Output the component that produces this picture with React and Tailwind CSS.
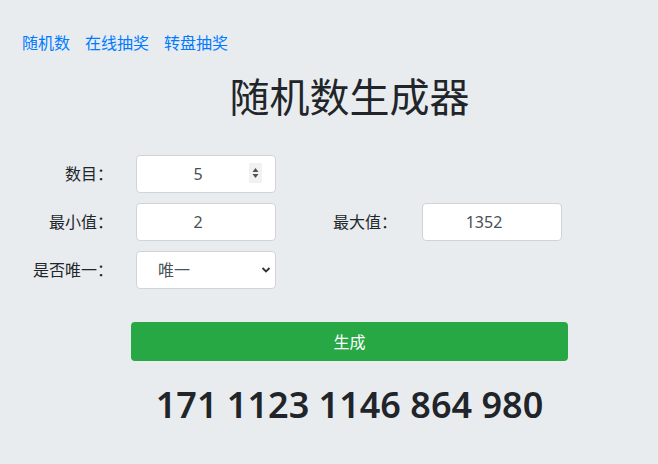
import React, { useState } from 'react';

const font = { fontFamily: '"Noto Sans", "Noto Sans CJK SC", sans-serif' };

const Spinner = () => (
  <svg className="absolute right-[14px] top-[8px]" width="13" height="20" viewBox="0 0 13 20">
    <rect x="0" y="0" width="13" height="20" fill="#f1f1f1" />
    <path d="M6.5 5 L9.5 9 L3.5 9 Z" fill="#505050" />
    <path d="M6.5 15 L9.5 11 L3.5 11 Z" fill="#505050" />
  </svg>
);

const Chevron = () => (
  <svg className="absolute right-[5px] top-[15px] pointer-events-none" width="10" height="8" viewBox="0 0 10 8">
    <path d="M1.5 2 L5 5.5 L8.5 2" fill="none" stroke="#333" strokeWidth="1.8" />
  </svg>
);

const Label = ({ children, className }) => (
  <label className={`text-right text-[16px] text-[#212529] ${className}`}>{children}</label>
);

const inputCls =
  'h-[38px] w-[140px] rounded-[4px] border border-[#ced4da] bg-white text-[16px] text-[#495057] outline-none';

const App = () => {
  const [count, setCount] = useState('5');
  const [min, setMin] = useState('2');
  const [max, setMax] = useState('1352');
  const [unique, setUnique] = useState('1');
  const result = [171, 1123, 1146, 864, 980];

  return (
    <div className="min-h-screen bg-[#e9ecef] text-[#212529]" style={font}>
      <nav className="flex gap-[15px] pl-[22px] pt-[31px] text-[16px] leading-[24px]">
        <a href="#" className="text-[#007bff]">随机数</a>
        <a href="#" className="text-[#007bff]">在线抽奖</a>
        <a href="#" className="text-[#007bff]">转盘抽奖</a>
      </nav>

      <h1 className="ml-[131px] mt-[18px] w-[437px] text-center text-[40px] font-normal leading-[48px]">
        随机数生成器
      </h1>

      <div className="mt-[34px] flex flex-col gap-[10px]">
        <div className="flex items-center">
          <Label className="w-[113px]">数目：</Label>
          <div className="relative ml-[23px]">
            <input
              className={`${inputCls} pr-[28px] pl-[12px] text-center`}
              value={count}
              onChange={(e) => setCount(e.target.value)}
            />
            <Spinner />
          </div>
        </div>

        <div className="flex items-center">
          <Label className="w-[113px]">最小值：</Label>
          <input
            className={`${inputCls} ml-[23px] pr-[28px] pl-[12px] text-center`}
            value={min}
            onChange={(e) => setMin(e.target.value)}
          />
          <Label className="w-[121px]">最大值：</Label>
          <input
            className={`${inputCls} ml-[25px] pr-[28px] pl-[12px] text-center`}
            value={max}
            onChange={(e) => setMax(e.target.value)}
          />
        </div>

        <div className="flex items-center">
          <Label className="w-[113px]">是否唯一：</Label>
          <div className="relative ml-[23px]">
            <select
              className={`${inputCls} appearance-none pl-[21px]`}
              value={unique}
              onChange={(e) => setUnique(e.target.value)}
            >
              <option value="1">唯一</option>
              <option value="0">可重复</option>
            </select>
            <Chevron />
          </div>
        </div>
      </div>

      <div className="ml-[131px] w-[437px]">
        <button className="mt-[33px] h-[39px] w-full rounded-[4px] bg-[#28a745] text-[16px] text-white">
          生成
        </button>
        <div className="mt-[20px] whitespace-nowrap text-center text-[36px] font-semibold leading-[48px]">
          {result.join(' ')}
        </div>
      </div>
    </div>
  );
};

export default App;
